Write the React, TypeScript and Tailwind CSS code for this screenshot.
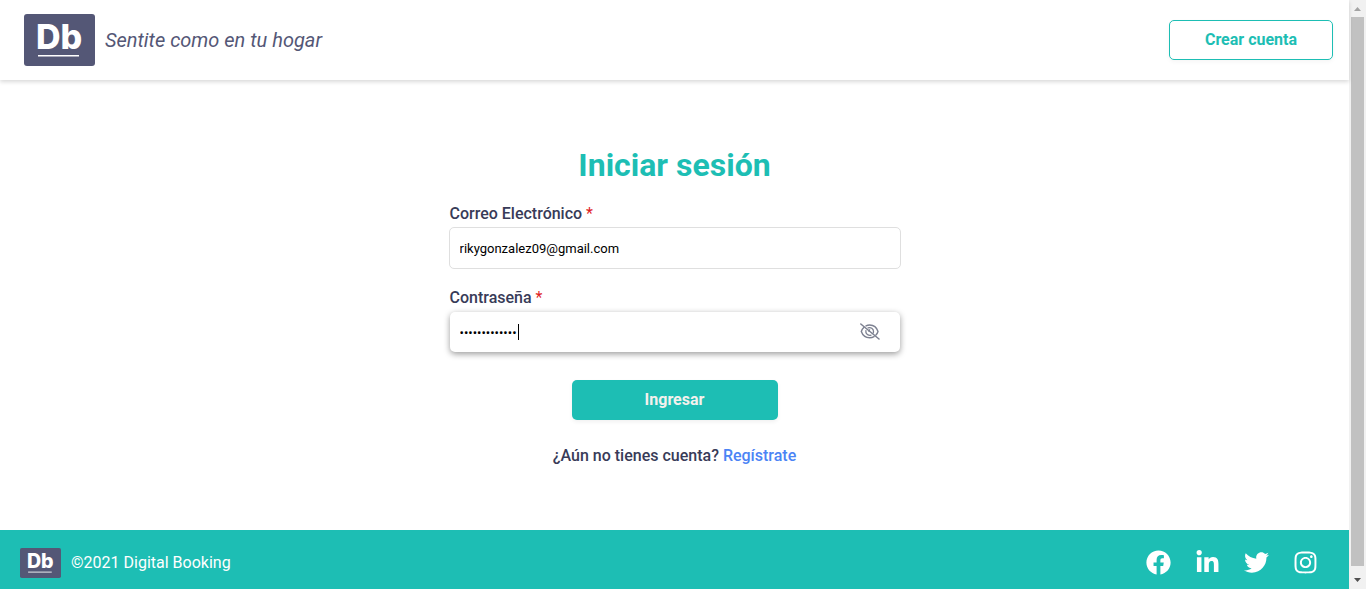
import { useState } from "react";
import { FaFacebook, FaInstagram, FaLinkedinIn, FaTwitter } from "react-icons/fa";

function Logo({ className }: { className: string }) {
  return (
    <svg viewBox="0 0 71 52" className={className} role="img" aria-label="Digital Booking">
      <rect width="71" height="52" rx="3" fill="#545776" />
      <text x="12" y="35" fill="#fff" fontFamily="Inter, sans-serif" fontWeight="800" fontSize="34">
        Db
      </text>
      <rect x="14" y="41" width="41" height="1.5" fill="#fff" />
    </svg>
  );
}

function EyeSlash() {
  return (
    <svg viewBox="0 0 20 17" className="h-[17px] w-5" fill="none" stroke="currentColor" strokeLinecap="round">
      <path d="M4 4.2C2.700 5.300 1.800 6.800 1.300 8.500C2.600 12.200 5.800 14.700 9.700 14.700C11.300 14.700 12.800 14.300 14.100 13.600" strokeWidth="1.400" />
      <path d="M6 2.900C7.100 2.300 8.400 2 9.700 2C13.600 2 16.800 4.700 18 8.500C17.600 9.900 16.900 11.100 15.900 12.100" strokeWidth="1.400" />
      <path d="M5.900 7.600C5.500 10.200 7.200 12.300 9.700 12.300C10.200 12.300 10.600 12.200 11 12.100" strokeWidth="1.300" />
      <path d="M8.100 4.900C10.700 3.900 13.500 5.600 13.500 8.500C13.500 9.100 13.400 9.600 13.200 10" strokeWidth="1.300" />
      <path d="M9.700 6.500C9.700 7.500 9.500 8 8.900 8.400" strokeWidth="1.100" />
      <path d="M.8 1 19 16" strokeWidth="1.500" />
    </svg>
  );
}

function Header() {
  return (
    <header className="z-10 flex h-20 shrink-0 items-center justify-between bg-white pr-4 pl-6 shadow-[0_2px_4px_rgba(0,0,0,0.15)]">
      <a href="#inicio" className="flex items-center gap-[10px]">
        <Logo className="h-[52px] w-[71px]" />
        <span className="text-xl text-[#545776] italic">Sentite como en tu hogar</span>
      </a>
      <button
        type="button"
        className="h-10 w-[164px] rounded-[5px] border border-[#1dbeb4] bg-white pb-px font-bold text-[#1dbeb4] shadow-[0_2px_4px_rgba(0,0,0,0.04)]"
      >
        Crear cuenta
      </button>
    </header>
  );
}

function LoginForm() {
  const [visible, setVisible] = useState(false);
  const [idle, setIdle] = useState(true);
  return (
    <form className="mx-auto flex w-full max-w-[452px] flex-col" onSubmit={(e) => e.preventDefault()}>
      <h1 className="text-center text-[32px] leading-10 font-bold text-[#1dbeb4]">Iniciar sesión</h1>
      <label htmlFor="email" className="mt-[17px] pl-px leading-6 font-medium text-[#383b58]">
        Correo Electrónico <span className="font-normal text-[#e01f1f]">*</span>
      </label>
      <input
        id="email"
        type="email"
        defaultValue="rikygonzalez09@gmail.com"
        className="mt-px h-[42px] rounded-[5px] border border-[#dfdfdf] bg-white px-[10px] text-[13px] text-black outline-none"
      />
      <label htmlFor="password" className="mt-[17px] pl-px leading-6 font-medium text-[#383b58]">
        Contraseña <span className="font-normal text-[#e01f1f]">*</span>
      </label>
      <div className="relative mx-px mt-[2px] flex h-10 items-center rounded-[5px] bg-white pr-5 pl-[10px] shadow-[0_2px_6px_rgba(0,0,0,0.4)]">
        <input
          id="password"
          type={visible ? "text" : "password"}
          defaultValue="contrasena123"
          onFocus={() => setIdle(false)}
          className="h-full min-w-0 flex-1 bg-transparent text-[13px] text-black outline-none"
        />
        {idle && <span className="absolute left-[68px] h-4 w-px bg-black" aria-hidden="true" />}
        <button
          type="button"
          aria-label="Mostrar contraseña"
          onClick={() => setVisible(!visible)}
          className="pb-[2px] text-[#7c8090]"
        >
          <EyeSlash />
        </button>
      </div>
      <button
        type="submit"
        className="mt-7 h-10 w-[206px] self-center rounded-[5px] bg-[#1dbeb4] pb-px font-bold text-[#f3f1ed] shadow-[0_2px_4px_rgba(0,0,0,0.06)]"
      >
        Ingresar
      </button>
      <p className="mt-6 text-center leading-6 font-medium text-[#383b58]">
        ¿Aún no tienes cuenta?{" "}
        <a href="#registro" className="text-[#4b84f5]">
          Regístrate
        </a>
      </p>
    </form>
  );
}

function Footer() {
  return (
    <footer className="flex h-[59px] shrink-0 items-center justify-between bg-[#1dbeb4] pt-[6px] pr-[31px] pl-5 text-white">
      <div className="flex items-center gap-[10px]">
        <Logo className="h-[30px] w-[41px]" />
        <p>©2021 Digital Booking</p>
      </div>
      <nav className="flex items-center gap-6 text-[25px]" aria-label="Redes sociales">
        <a href="#facebook" aria-label="Facebook"><FaFacebook /></a>
        <a href="#linkedin" aria-label="LinkedIn"><FaLinkedinIn /></a>
        <a href="#twitter" aria-label="Twitter"><FaTwitter /></a>
        <a href="#instagram" aria-label="Instagram"><FaInstagram /></a>
      </nav>
    </footer>
  );
}

function ScrollRail() {
  return (
    <div className="flex w-[17px] shrink-0 flex-col items-center bg-[#f1f1f1]" aria-hidden="true">
      <svg viewBox="0 0 17 17" className="h-[17px] w-[17px]">
        <path d="M5 11 8.5 7 12 11Z" fill="#a3a3a3" />
      </svg>
      <div className="w-[13px] flex-1 bg-[#c1c1c1]" />
      <svg viewBox="0 0 17 23" className="h-[23px] w-[17px]">
        <path d="M5 12 8.5 16 12 12Z" fill="#505050" />
      </svg>
    </div>
  );
}

export default function App() {
  return (
    <div className="flex min-h-screen bg-white font-['Roboto',sans-serif] text-base">
      <div className="flex min-w-0 flex-1 flex-col">
        <Header />
        <main className="flex-1 px-4 pt-[65px] pb-[62px]">
          <LoginForm />
        </main>
        <Footer />
      </div>
      <ScrollRail />
    </div>
  );
}
